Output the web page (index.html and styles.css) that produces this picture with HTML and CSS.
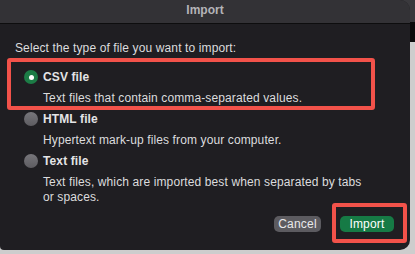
FILE: index.html
```html
<!DOCTYPE html>
<html lang="en">
<head>
    <meta charset="UTF-8">
    <title>Import</title>
    <link rel="stylesheet" href="styles.css">
</head>
<body>
    <div class="dialog">
        <div class="titlebar">Import</div>
        <div class="content">
            <p class="prompt">Select the type of file you want to import:</p>

            <div class="option highlight">
                <div class="option-head">
                    <span class="radio checked"></span>
                    <span class="option-name">CSV file</span>
                </div>
                <p class="option-desc">Text files that contain comma-separated values.</p>
            </div>

            <div class="option">
                <div class="option-head">
                    <span class="radio"></span>
                    <span class="option-name">HTML file</span>
                </div>
                <p class="option-desc">Hypertext mark-up files from your computer.</p>
            </div>

            <div class="option">
                <div class="option-head">
                    <span class="radio"></span>
                    <span class="option-name">Text file</span>
                </div>
                <p class="option-desc">Text files, which are imported best when separated by tabs<br>or spaces.</p>
            </div>
        </div>
        <div class="footer">
            <button class="btn btn-cancel">Cancel</button>
            <span class="btn-wrap highlight-btn">
                <button class="btn btn-primary">Import</button>
            </span>
        </div>
    </div>
</body>
</html>
```

FILE: styles.css
```css
html, body {
    margin: 0;
    padding: 0;
}
body {
    width: 415px;
    height: 254px;
    overflow: hidden;
    font-family: 'Liberation Sans', Arial, sans-serif;
    font-size: 12px;
    background: linear-gradient(to bottom, #3a393d 0, #3a393d 22px, #0b0b0c 22px, #0b0b0c 42px, #cdcdcd 42px);
}
.dialog {
    position: relative;
    width: 410px;
    height: 250px;
    background: #1f1e22;
    border-radius: 0 10px 10px 4px;
    display: flex;
    flex-direction: column;
    overflow: hidden;
}
.titlebar {
    height: 21px;
    padding-bottom: 2px;
    line-height: 21px;
    text-align: center;
    font-weight: bold;
    color: #b5b4b8;
    background: #333236;
    border-bottom: 1px solid #0d0d0e;
}
.content {
    padding-left: 15px;
    color: #dcdcde;
    letter-spacing: 0.12px;
}
.prompt {
    margin: 16px 0 0;
    line-height: 16px;
}
.option {
    position: relative;
    margin-top: 5px;
}
.option.highlight {
    margin-top: 13px;
}
.highlight::after {
    content: '';
    position: absolute;
    left: -8px;
    right: 35px;
    top: -11px;
    bottom: -4px;
    border: 4px solid #f2524a;
    border-radius: 3px;
}
.option-head {
    display: flex;
    align-items: center;
    height: 16px;
    padding-left: 9px;
}
.radio {
    width: 14px;
    height: 14px;
    border-radius: 50%;
    background: linear-gradient(#77767b, #5d5c61);
    margin-right: 5px;
    box-sizing: border-box;
}
.radio.checked {
    background: #1c7c46;
    display: flex;
    align-items: center;
    justify-content: center;
}
.radio.checked::before {
    content: '';
    width: 5px;
    height: 5px;
    border-radius: 50%;
    background: #fff;
}
.option-name {
    font-weight: bold;
    color: #e4e4e6;
}
.option-desc {
    margin: 6px 0 0;
    padding-left: 28px;
    line-height: 15px;
}
.footer {
    margin-top: auto;
    padding: 0 16px 18px 0;
    display: flex;
    justify-content: flex-end;
    align-items: center;
    gap: 19px;
}
.btn {
    font-family: inherit;
    font-size: 12px;
    height: 16px;
    line-height: 16px;
    padding: 0;
    border: none;
    border-radius: 5px;
    color: #e8e8ea;
    letter-spacing: 0.2px;
}
.btn-cancel {
    width: 47px;
    background: #5c5b60;
}
.btn-primary {
    width: 54px;
    background: #167a45;
    color: #fff;
    display: block;
}
.btn-wrap {
    position: relative;
    display: block;
}
.highlight-btn::after {
    content: '';
    position: absolute;
    left: -8px;
    right: -13px;
    top: -13px;
    bottom: -11px;
    border: 4px solid #f2524a;
    border-radius: 3px;
}
```
